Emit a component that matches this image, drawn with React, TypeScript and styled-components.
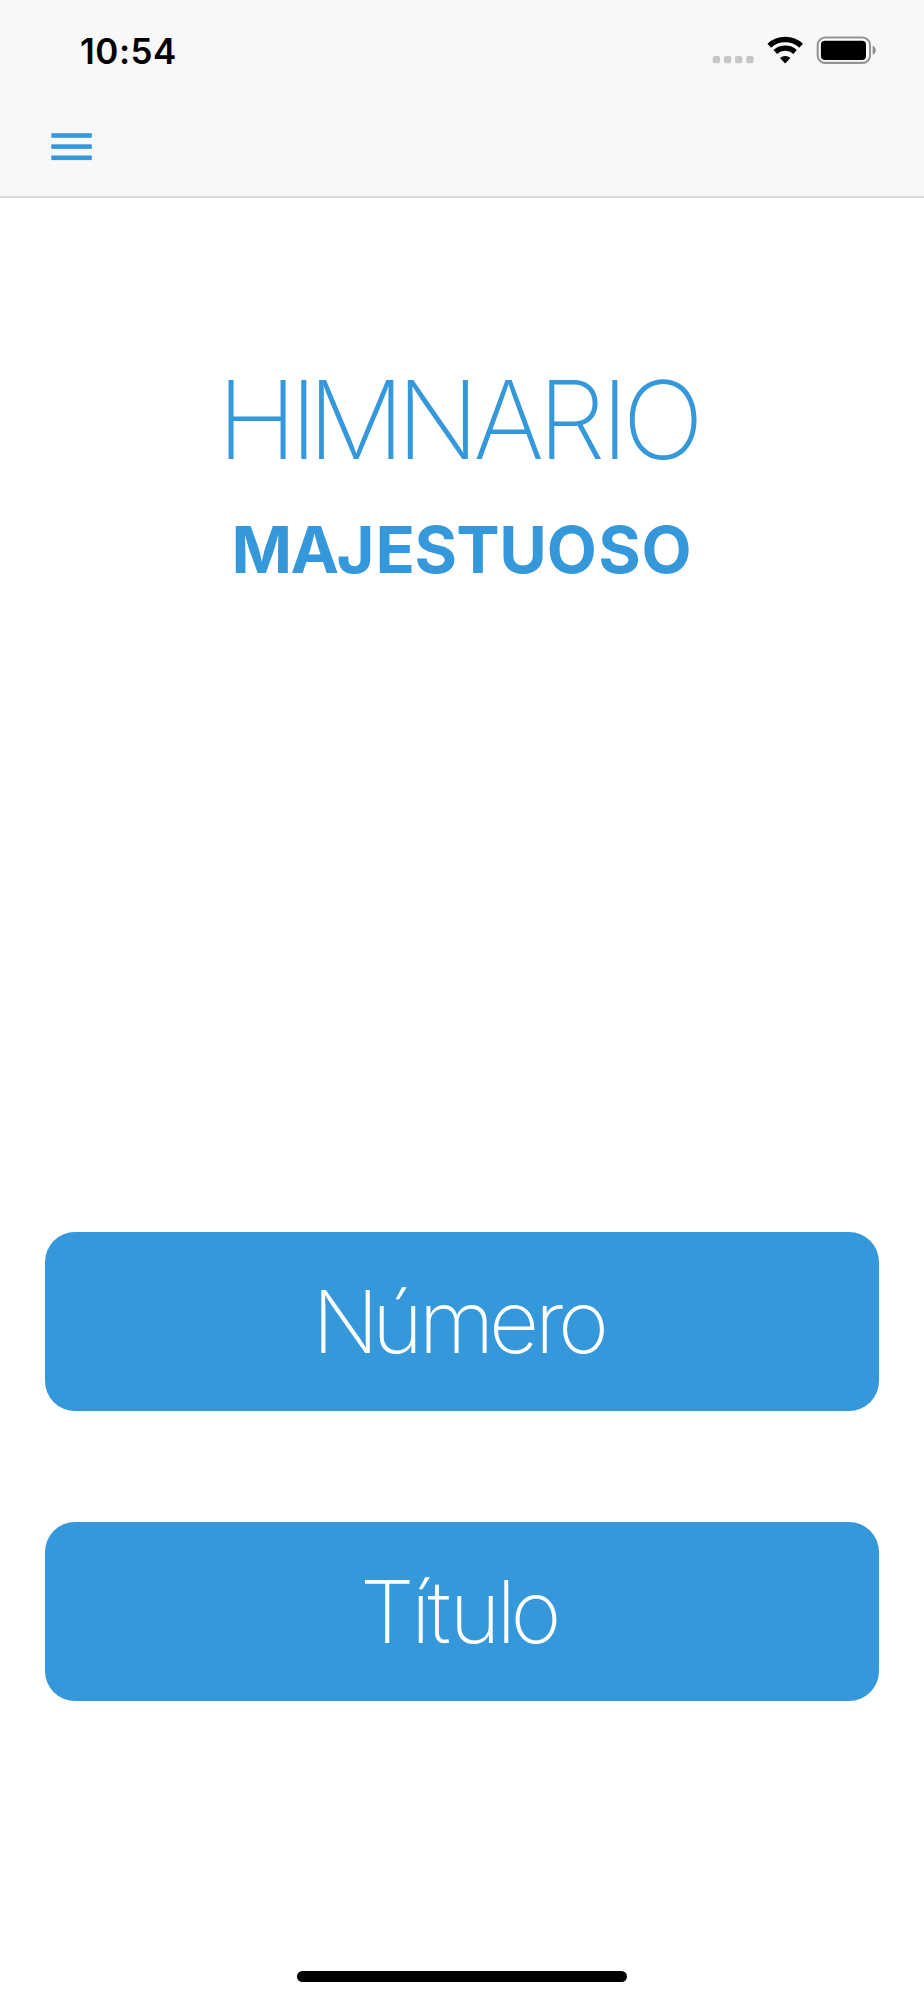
import React from "react";
import styled, { createGlobalStyle } from "styled-components";

const BLUE = "#3498db";

const Global = createGlobalStyle`
  * { box-sizing: border-box; }
  body { margin: 0; background: #fff; font-family: Inter, sans-serif; }
`;
const Screen = styled.div`
  width: 924px;
  height: 2000px;
  display: flex;
  flex-direction: column;
  background: #fff;
  overflow: hidden;
`;
const Header = styled.header`
  height: 198px;
  flex: none;
  background: #f8f8f8;
  border-bottom: 2px solid #dadada;
`;
const StatusBar = styled.div`
  height: 101px;
  padding: 0 46px 0 80px;
  display: flex;
  justify-content: space-between;
  align-items: center;
`;
const Time = styled.div`
  font-size: 35px;
  font-weight: 600;
  line-height: 44px;
  letter-spacing: 0.5px;
  color: #000;
`;
const Indicators = styled.svg`
  display: block;
  width: 166px;
  height: 29px;
`;
const MenuButton = styled.button`
  display: block;
  margin: 32px 0 0 51px;
  padding: 0;
  border: 0;
  background: none;
`;
const MenuIcon = styled.svg`
  display: block;
  width: 41px;
  height: 28px;
  fill: ${BLUE};
`;
const Brand = styled.div`
  flex: none;
  display: flex;
  flex-direction: column;
  align-items: center;
  height: 1034px;
  padding-top: 152px;
  color: ${BLUE};
`;
const Title = styled.h1`
  margin: 0;
  font-size: 108px;
  line-height: 140px;
  font-weight: 200;
  white-space: nowrap;
`;
const Subtitle = styled.h2`
  margin: 20px 0 0;
  font-size: 65px;
  line-height: 80px;
  font-weight: 700;
  white-space: nowrap;
`;
const Actions = styled.nav`
  display: flex;
  flex-direction: column;
  gap: 111px;
  padding: 0 45px;
`;
const Action = styled.button`
  height: 179px;
  padding: 0;
  border: 0;
  border-radius: 30px;
  background: ${BLUE};
  color: #fff;
  font: 200 87px/110px Inter, sans-serif;
`;
const HomeIndicator = styled.div`
  width: 330px;
  height: 11px;
  margin: auto auto 18px;
  border-radius: 6px;
  background: #000;
`;
const Letter = styled.span<{ $space: number }>`
  letter-spacing: ${(p) => p.$space}px;
`;

/* Sets a word with its own optical spacing after each letter. */
function Kerned({ text, spacing }: { text: string; spacing: number[] }) {
  return (
    <span>
      {Array.from(text).map((letter, i) => (
        <Letter key={i} $space={spacing[i]}>
          {letter}
        </Letter>
      ))}
    </span>
  );
}

export default function App() {
  return (
    <Screen>
      <Global />
      <Header>
        <StatusBar>
          <Time>10:54</Time>
          <Indicators viewBox="0 0 166 29">
            <g fill="#c6c6c6">
              <rect x="0.700" y="20" width="7.400" height="7.300" rx="2" />
              <rect x="11.900" y="20" width="7.400" height="7.300" rx="2" />
              <rect x="23" y="20" width="7.400" height="7.300" rx="2" />
              <rect x="34.200" y="20" width="7.400" height="7.300" rx="2" />
            </g>
            <g fill="none" stroke="#000" strokeWidth="5.400">
              <path d="M57.300 9.700A23.500 23.500 0 0 1 89.100 9.700" />
              <path d="M63.300 15.900A14.900 14.900 0 0 1 83.100 15.900" />
            </g>
            <path d="M68 22.100A7.700 7.700 0 0 1 78.400 22.100L73.200 27.400Z" />
            <rect x="105.700" y="1.500" width="52.300" height="25.400" rx="7.500" fill="#fcfcfc" stroke="#949494" strokeWidth="2.100" />
            <rect x="108.900" y="4.800" width="45.100" height="19.200" rx="4" />
            <path d="M160.700 9.800Q163.700 11 163.700 14.300T160.700 18.800Z" fill="#8c8c8c" />
          </Indicators>
        </StatusBar>
        <MenuButton aria-label="Menú">
          <MenuIcon viewBox="0 0 41 28">
            <rect x="0.300" y="0.200" width="40.500" height="4.600" />
            <rect x="0.300" y="11.300" width="40.500" height="4.600" />
            <rect x="0.300" y="22.500" width="40.500" height="4.600" />
          </MenuIcon>
        </MenuButton>
      </Header>
      <Brand>
        <Title>
          <Kerned text="HIMNARIO" spacing={[-6.8, -9.8, -8.2, -6, -6, -4.6, -6, 3]} />
        </Title>
        <Subtitle>
          <Kerned text="MAJESTUOSO" spacing={[-1.5, -2.5, 1, -0.5, -1, -0.4, 0, 1.3, 0.7, 1]} />
        </Subtitle>
      </Brand>
      <Actions>
        <Action>
          <Kerned text="Número" spacing={[-7, -4.3, -5.3, -4.1, -6.8, 2.6]} />
        </Action>
        <Action>
          <Kerned text="Título" spacing={[-3.5, -3.1, -1.4, -4, -5.6, 2.5]} />
        </Action>
      </Actions>
      <HomeIndicator />
    </Screen>
  );
}
